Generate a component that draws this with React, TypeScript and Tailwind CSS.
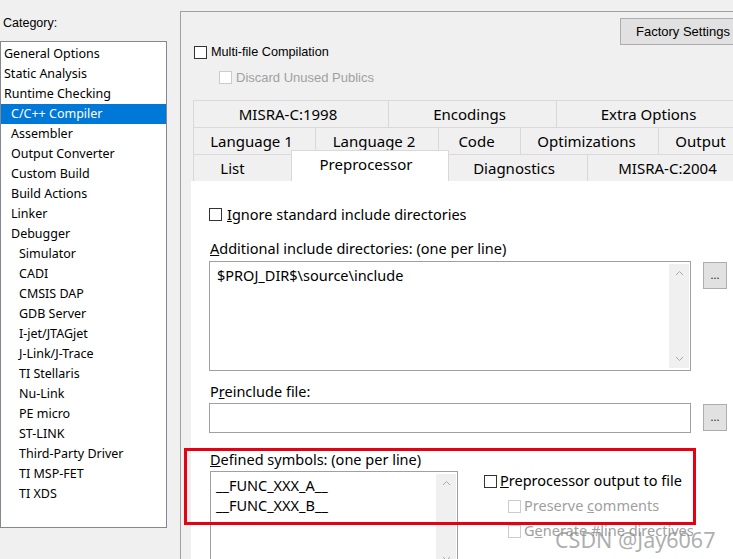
import React from "react";

const ui = "font-['Noto_Sans',sans-serif]";
const ms = "font-['Liberation_Sans',Arial,sans-serif]";

const categories: { label: string; level: number }[] = [
  { label: "General Options", level: 0 },
  { label: "Static Analysis", level: 0 },
  { label: "Runtime Checking", level: 0 },
  { label: "C/C++ Compiler", level: 1 },
  { label: "Assembler", level: 1 },
  { label: "Output Converter", level: 1 },
  { label: "Custom Build", level: 1 },
  { label: "Build Actions", level: 1 },
  { label: "Linker", level: 1 },
  { label: "Debugger", level: 1 },
  { label: "Simulator", level: 2 },
  { label: "CADI", level: 2 },
  { label: "CMSIS DAP", level: 2 },
  { label: "GDB Server", level: 2 },
  { label: "I-jet/JTAGjet", level: 2 },
  { label: "J-Link/J-Trace", level: 2 },
  { label: "TI Stellaris", level: 2 },
  { label: "Nu-Link", level: 2 },
  { label: "PE micro", level: 2 },
  { label: "ST-LINK", level: 2 },
  { label: "Third-Party Driver", level: 2 },
  { label: "TI MSP-FET", level: 2 },
  { label: "TI XDS", level: 2 },
];

const tabRows: { label: string; w: number }[][] = [
  [
    { label: "MISRA-C:1998", w: 195 },
    { label: "Encodings", w: 168 },
    { label: "Extra Options", w: 190 },
  ],
  [
    { label: "Language 1", w: 122 },
    { label: "Language 2", w: 123 },
    { label: "Code", w: 82 },
    { label: "Optimizations", w: 138 },
    { label: "Output", w: 90 },
  ],
];

function Check({ disabled = false }: { disabled?: boolean }) {
  return (
    <span
      className={
        "inline-block w-[13px] h-[13px] shrink-0 bg-white border " +
        (disabled ? "border-[#cccccc]" : "border-[#333333]")
      }
    />
  );
}

function Scroll() {
  return (
    <div className="w-[20px] h-full bg-[#f0f0f0] flex flex-col items-center justify-between py-[6px] text-[#a8a8a8]">
      <svg width="9" height="6" viewBox="0 0 9 6">
        <path d="M1 5 L4.5 1.5 L8 5" fill="none" stroke="currentColor" strokeWidth="1" />
      </svg>
      <svg width="9" height="6" viewBox="0 0 9 6">
        <path d="M1 1 L4.5 4.5 L8 1" fill="none" stroke="currentColor" strokeWidth="1" />
      </svg>
    </div>
  );
}

function Dots() {
  return (
    <div className="w-[24px] h-[27px] bg-[#e1e1e1] border border-[#adadad] flex items-center justify-center text-[11px] leading-none text-[#222] pb-[2px]">
      ...
    </div>
  );
}

export default function App() {
  return (
    <div className={"relative w-[733px] h-[559px] overflow-hidden bg-[#f0f0f0] flex text-[#000] " + ui}>
      {/* category column */}
      <div className="w-[180px] shrink-0 flex flex-col">
        <div className={"h-[41px] pl-[3px] pt-[15px] text-[12.5px] leading-[16px] " + ms}>Category:</div>
        <div className="w-[167px] h-[487px] bg-white border border-[#828790] pt-[2px]">
          {categories.map((c) => (
            <div
              key={c.label}
              className={
                "h-[20px] flex items-center text-[12.5px] whitespace-nowrap " +
                (c.label === "C/C++ Compiler" ? "bg-[#0078d7] text-white " : "") +
                (c.level === 0 ? "pl-[3px]" : c.level === 1 ? "pl-[10px]" : "pl-[18px]")
              }
            >
              {c.label}
            </div>
          ))}
        </div>
      </div>

      {/* options panel */}
      <div className="flex-1 min-w-0 mt-[11px] border-l border-t border-[#a0a0a0] flex flex-col">
        <div className="flex mt-[6px] pl-[439px]">
          <div className={"w-[130px] h-[27px] shrink-0 bg-[#e1e1e1] border border-[#adadad] flex items-center pl-[15px] text-[13px] whitespace-nowrap " + ms}>
            Factory Settings
          </div>
        </div>
        <div className={"flex items-center gap-[4px] pl-[13px] mt-[1px] h-[13px] text-[12.7px] " + ms}>
          <Check />
          <span>Multi-file Compilation</span>
        </div>
        <div className={"flex items-center gap-[4px] pl-[38px] mt-[12px] h-[13px] text-[13px] text-[#a0a0a0] " + ms}>
          <Check disabled />
          <span>Discard Unused Publics</span>
        </div>

        {/* tabs */}
        <div className="mt-[16px] pl-[12px] flex flex-col text-[15px]">
          {tabRows.map((row, i) => (
            <div key={i} className="flex h-[27px]">
              {row.map((t) => (
                <div
                  key={t.label}
                  style={{ width: t.w }}
                  className="shrink-0 border-t border-l border-[#d9d9d9] flex items-center justify-center pr-[6px] whitespace-nowrap"
                >
                  {t.label}
                </div>
              ))}
            </div>
          ))}
          <div className="flex h-[27px] items-end">
            <div className="w-[98px] h-[27px] shrink-0 border-t border-l border-[#d9d9d9] flex items-center justify-center pr-[20px]">
              List
            </div>
            <div className="w-[158px] h-[31px] shrink-0 bg-white border-t border-l border-r border-[#d9d9d9] flex items-center justify-center pb-[3px] pr-[8px] relative z-10">
              Preprocessor
            </div>
            <div className="w-[138px] h-[27px] shrink-0 border-t border-[#d9d9d9] flex items-center justify-center pr-[8px]">
              Diagnostics
            </div>
            <div className="w-[160px] h-[27px] shrink-0 border-t border-l border-[#d9d9d9] flex items-center justify-center whitespace-nowrap">
              MISRA-C:2004
            </div>
          </div>
        </div>

        {/* tab page */}
        <div className="flex-1 ml-[10px] bg-white pl-[18px] pt-[27px] flex flex-col text-[14.5px]">
          <div className="flex items-center gap-[5px] h-[13px]">
            <Check />
            <span><u>I</u>gnore standard include directories</span>
          </div>
          <div className="mt-[17px] pl-[1px] leading-[20px]">
            <u>A</u>dditional include directories: (one per line)
          </div>
          <div className="mt-[3px] flex items-start gap-[12px]">
            <div className="w-[482px] h-[110px] border border-[#a0a0a0] flex">
              <div className="flex-1 pl-[7px] pt-[3px]">$PROJ_DIR$\source\include</div>
              <div className="py-[2px] pr-[1px]">
                <Scroll />
              </div>
            </div>
            <div className="mt-[1px]">
              <Dots />
            </div>
          </div>
          <div className="mt-[10px] pl-[1px] leading-[20px]">
            P<u>r</u>einclude file:
          </div>
          <div className="mt-[2px] flex items-start gap-[12px]">
            <div className="w-[482px] h-[30px] border border-[#a0a0a0] bg-white" />
            <div className="mt-[1px]">
              <Dots />
            </div>
          </div>
          <div className="mt-[16px] pl-[1px] leading-[20px]">
            <u>D</u>efined symbols: (one per line)
          </div>
          <div className="mt-[2px] flex items-start">
            <div className="ml-[1px] w-[248px] h-[100px] border border-[#a0a0a0] flex">
              <div className="flex-1 pl-[5px] pt-[3px] leading-[20px]">
                <div>__FUNC_XXX_A__</div>
                <div>__FUNC_XXX_B__</div>
              </div>
              <div className="py-[2px] pr-[1px]">
                <Scroll />
              </div>
            </div>
            <div className="ml-[26px] mt-[3px] flex flex-col">
              <div className="flex items-center gap-[3px] h-[14px]">
                <Check />
                <span><u>P</u>reprocessor output to file</span>
              </div>
              <div className="flex items-center gap-[3px] h-[14px] mt-[11px] ml-[24px] text-[#a0a0a0]">
                <Check disabled />
                <span>Preserve <u>c</u>omments</span>
              </div>
              <div className="flex items-center gap-[3px] h-[14px] mt-[11px] ml-[24px] text-[#a0a0a0]">
                <Check disabled />
                <span>G<u>e</u>nerate #line directives</span>
              </div>
            </div>
          </div>
        </div>
      </div>

      {/* annotation box */}
      <div className="absolute left-[184px] top-[448px] w-[512px] h-[77px] border-[3px] border-[#e60012] pointer-events-none" />
      {/* watermark */}
      <div className="absolute left-[555px] top-[526px] text-[21.5px] leading-[28px] text-[#8a8a8a]/70 pointer-events-none">
        CSDN @Jay6067
      </div>
    </div>
  );
}
